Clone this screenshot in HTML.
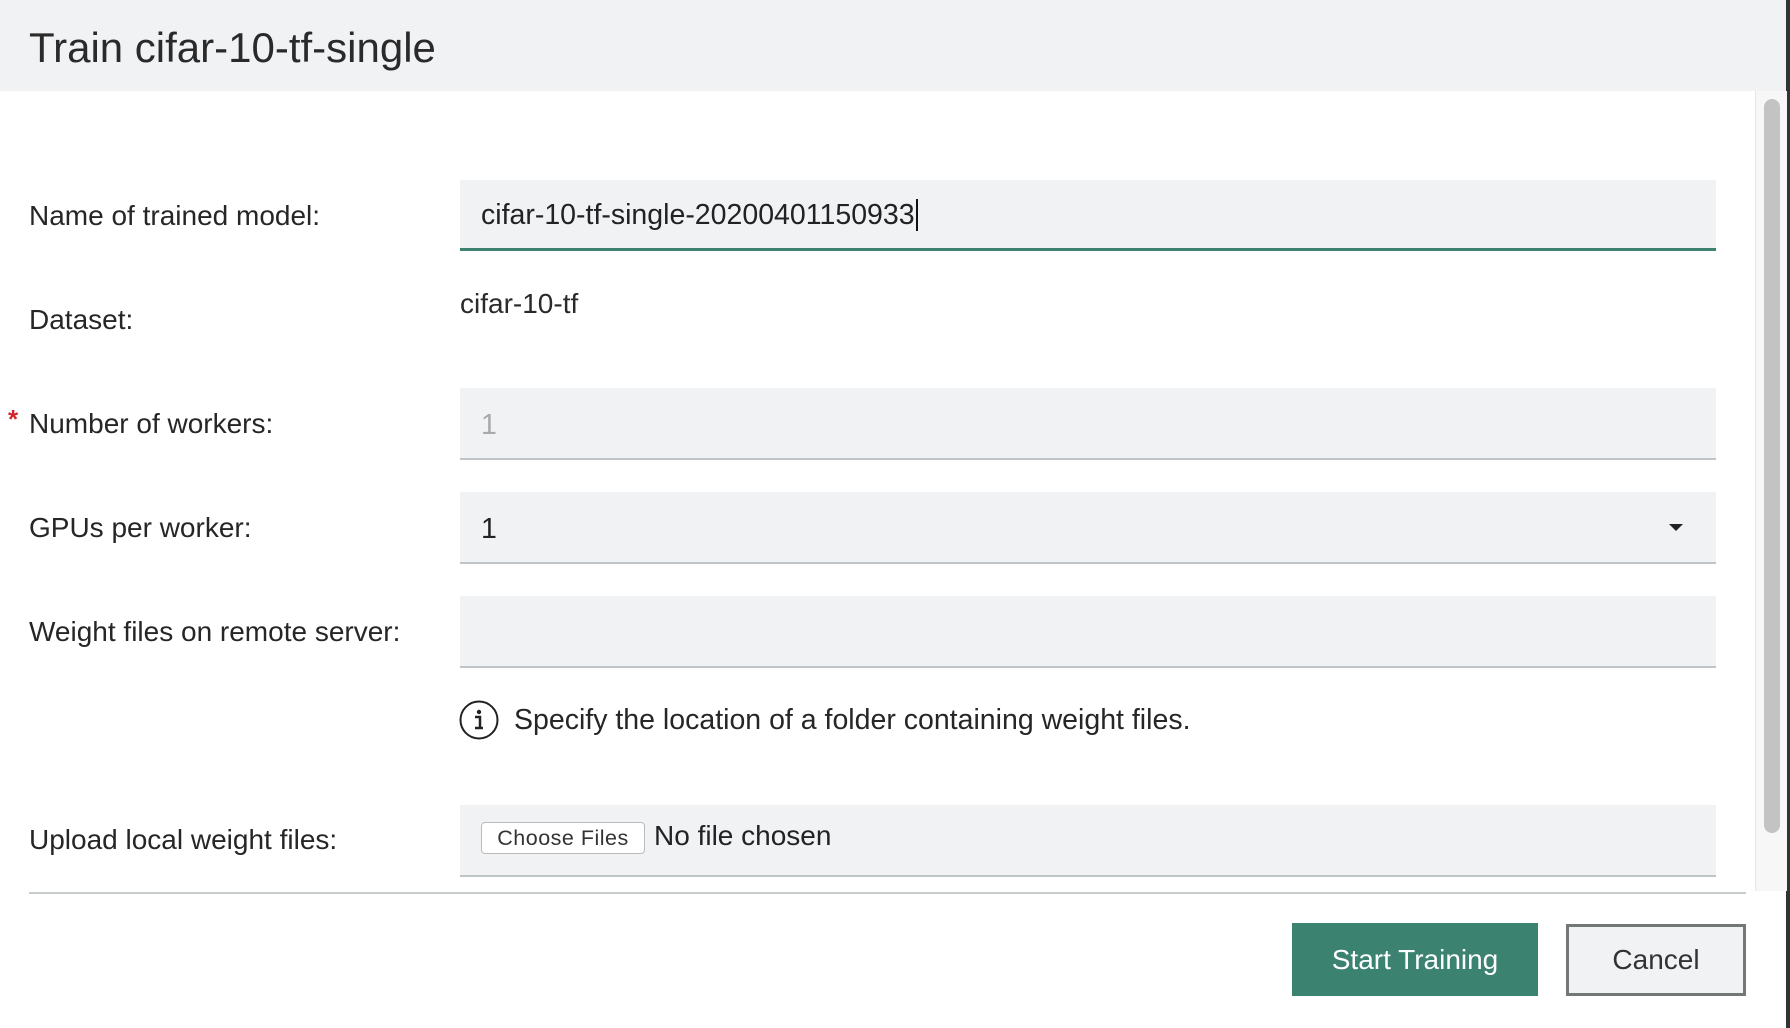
<!DOCTYPE html>
<html><head><meta charset="utf-8"><style>
body{margin:0;width:1790px;height:1028px;background:#fff;position:relative;overflow:hidden;font-family:"Liberation Sans",Arial,sans-serif;color:#222;}
.a{position:absolute}
.hdr{left:0;top:0;width:1786px;height:91px;background:#f1f2f4}
.title{left:29px;top:24px;font-size:42px;color:#2a2a2a}
.lbl{left:29px;font-size:28px;color:#262626}
.inp{left:460px;width:1256px;background:#f1f2f4;border-bottom:2px solid #bfc4c6;box-sizing:border-box}
.val{font-size:28.5px;position:absolute;left:21px}
</style></head><body>
<div class="a hdr"></div>
<div class="a title">Train cifar-10-tf-single</div>
<div class="a" style="left:1786px;top:0;width:4px;height:1028px;background:#333"></div>
<div class="a" style="left:1755px;top:91px;width:31px;height:800px;background:#f7f7f7;border-left:1px solid #e6e6e6"></div>
<div class="a" style="left:1764px;top:99px;width:16px;height:734px;background:#c3c3c3;border-radius:8px"></div>

<div class="a lbl" style="top:200px">Name of trained model:</div>
<div class="a inp" style="top:180px;height:71px;border-bottom:3px solid #3d8270"><span class="val" style="top:19px;color:#222">cifar-10-tf-single-20200401150933<span style="border-left:2px solid #111;margin-left:1px"></span></span></div>

<div class="a lbl" style="top:304px">Dataset:</div>
<div class="a" style="left:460px;top:288px;font-size:28px;color:#2a2a2a">cifar-10-tf</div>

<div class="a" style="left:8px;top:404px;font-size:26px;font-weight:bold;color:#d0262f">*</div>
<div class="a lbl" style="top:408px">Number of workers:</div>
<div class="a inp" style="top:388px;height:72px"><span class="val" style="top:21px;color:#aaa">1</span></div>

<div class="a lbl" style="top:512px">GPUs per worker:</div>
<div class="a inp" style="top:492px;height:72px"><span class="val" style="top:21px;color:#222">1</span>
<div class="a" style="left:1209px;top:32px;width:0;height:0;border-left:7px solid transparent;border-right:7px solid transparent;border-top:7px solid #222"></div></div>

<div class="a lbl" style="top:616px">Weight files on remote server:</div>
<div class="a inp" style="top:596px;height:72px"></div>

<svg class="a" style="left:459px;top:700px" width="40" height="40" viewBox="0 0 40 40"><circle cx="20" cy="20" r="18.5" fill="none" stroke="#222" stroke-width="2"/><circle cx="20" cy="12" r="2.2" fill="#222"/><path d="M16 17h5v11M16 28h8" fill="none" stroke="#222" stroke-width="2.5"/></svg>
<div class="a" style="left:514px;top:704px;font-size:28.5px;color:#262626">Specify the location of a folder containing weight files.</div>

<div class="a lbl" style="top:824px">Upload local weight files:</div>
<div class="a inp" style="top:805px;height:72px">
<div class="a" style="left:21px;top:17px;width:164px;height:32px;background:#fff;border:1px solid #bbb;border-radius:4px;box-sizing:border-box;font-size:21.5px;text-align:center;line-height:30px;color:#333;letter-spacing:0.5px">Choose Files</div>
<span class="val" style="left:194px;top:15px;font-size:28px">No file chosen</span></div>

<div class="a" style="left:29px;top:892px;width:1717px;height:2px;background:#c9cccd"></div>

<div class="a" style="left:1292px;top:923px;width:246px;height:73px;background:#3c8270;color:#fff;font-size:28px;text-align:center;line-height:73px">Start Training</div>
<div class="a" style="left:1566px;top:924px;width:180px;height:72px;background:#f1f2f4;border:3px solid #737876;box-sizing:border-box;color:#333;font-size:28px;text-align:center;line-height:66px">Cancel</div>
</body></html>
